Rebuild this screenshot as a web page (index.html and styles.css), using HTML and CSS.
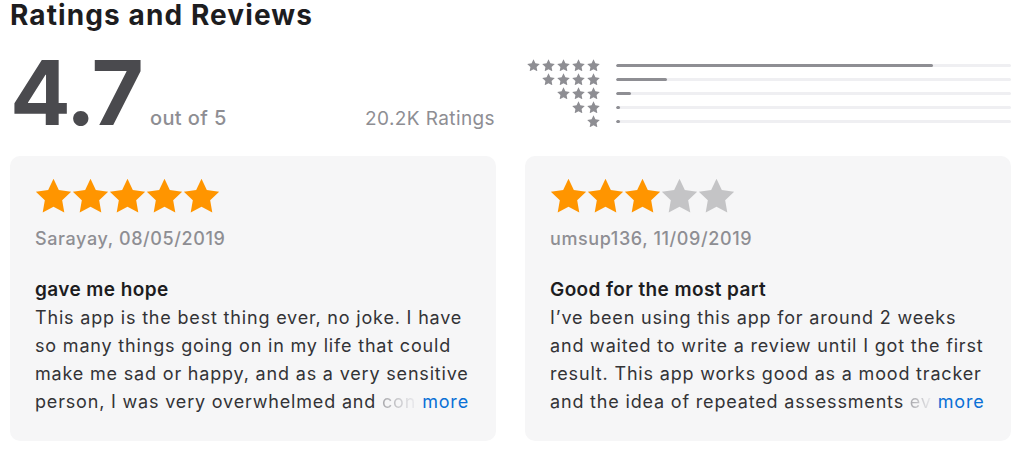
FILE: index.html
```html
<!DOCTYPE html>
<html>
<head>
<meta charset="utf-8">
<link rel="stylesheet" href="styles.css">
</head>
<body>
<svg width="0" height="0" class="defs">
  <defs>
    <symbol id="star" viewBox="0 0 24 23">
      <path d="M12 0.5l3.5 7.4 8.1 1.1-5.9 5.7 1.4 8L12 18.9l-7.1 3.8 1.4-8L0.4 9l8.1-1.1z"/>
    </symbol>
  </defs>
</svg>
<section class="ratings">
  <h1 class="title">Ratings and Reviews</h1>
  <div class="summary">
    <div class="score">
      <span class="big">4.7</span>
      <span class="outof">out of 5</span>
      <span class="count">20.2K Ratings</span>
    </div>
    <div class="hist">
      <div class="row">
        <div class="mini"><svg><use href="#star"/></svg><svg><use href="#star"/></svg><svg><use href="#star"/></svg><svg><use href="#star"/></svg><svg><use href="#star"/></svg></div>
        <div class="track"><div class="fill" style="width:80.2%"></div></div>
      </div>
      <div class="row">
        <div class="mini"><svg><use href="#star"/></svg><svg><use href="#star"/></svg><svg><use href="#star"/></svg><svg><use href="#star"/></svg></div>
        <div class="track"><div class="fill" style="width:12.8%"></div></div>
      </div>
      <div class="row">
        <div class="mini"><svg><use href="#star"/></svg><svg><use href="#star"/></svg><svg><use href="#star"/></svg></div>
        <div class="track"><div class="fill" style="width:3.9%"></div></div>
      </div>
      <div class="row">
        <div class="mini"><svg><use href="#star"/></svg><svg><use href="#star"/></svg></div>
        <div class="track"><div class="fill" style="width:1%"></div></div>
      </div>
      <div class="row">
        <div class="mini"><svg><use href="#star"/></svg></div>
        <div class="track"><div class="fill" style="width:1%"></div></div>
      </div>
    </div>
  </div>
  <div class="cards">
    <article class="card">
      <div class="stars">
        <svg class="on"><use href="#star"/></svg><svg class="on"><use href="#star"/></svg><svg class="on"><use href="#star"/></svg><svg class="on"><use href="#star"/></svg><svg class="on"><use href="#star"/></svg>
      </div>
      <div class="author">Sarayay, 08/05/2019</div>
      <h2 class="rtitle">gave me hope</h2>
      <p class="body">This app is the best thing ever, no joke. I have<br>so many things going on in my life that could<br>make me sad or happy, and as a very sensitive<br>person, I was very overwhelmed and <span class="fade">con</span><span class="more">more</span></p>
    </article>
    <article class="card">
      <div class="stars">
        <svg class="on"><use href="#star"/></svg><svg class="on"><use href="#star"/></svg><svg class="on"><use href="#star"/></svg><svg class="off"><use href="#star"/></svg><svg class="off"><use href="#star"/></svg>
      </div>
      <div class="author">umsup136, 11/09/2019</div>
      <h2 class="rtitle">Good for the most part</h2>
      <p class="body">I’ve been using this app for around 2 weeks<br>and waited to write a review until I got the first<br>result. This app works good as a mood tracker<br>and the idea of repeated assessments <span class="fade">ev</span><span class="more">more</span></p>
    </article>
  </div>
</section>
</body>
</html>
```
FILE: styles.css
```css
* { box-sizing: border-box; }
html, body { margin: 0; padding: 0; background: #fff; }
body {
  font-family: Inter, "Noto Sans", "Liberation Sans", sans-serif;
  color: #1d1d1f;
}
.defs { position: absolute; }
.ratings { padding: 0 11px 0 10px; }
.title {
  margin: 0;
  font-size: 28px;
  line-height: 30px;
  font-weight: 700;
  letter-spacing: 1.1px;
  color: #1d1d1f;
}
.summary {
  display: flex;
  align-items: flex-start;
  height: 126px;
}
.score {
  width: 485px;
  display: flex;
  align-items: baseline;
  padding-top: 15px;
}
.big {
  font-size: 90px;
  font-weight: 700;
  letter-spacing: -2px;
  line-height: 96px;
  color: #4a4a4e;
}
.outof {
  font-size: 20px;
  font-weight: 500;
  letter-spacing: 0.4px;
  color: #8e8e93;
  margin-left: 8px;
}
.count {
  margin-left: auto;
  font-size: 19px;
  letter-spacing: 0.4px;
  color: #8e8e93;
}
.hist {
  flex: 1;
  margin-left: 30px;
  padding-top: 28px;
  display: flex;
  flex-direction: column;
}
.row {
  display: flex;
  align-items: center;
  height: 14px;
}
.mini {
  width: 75px;
  display: flex;
  justify-content: flex-end;
  gap: 2px;
}
.mini svg { width: 13px; height: 12.5px; fill: #8e8e93; }
.track {
  flex: 1;
  margin-left: 16px;
  height: 3px;
  background: #efeff2;
  border-radius: 2px;
  overflow: hidden;
}
.fill { height: 100%; background: #8e8e93; border-radius: 2px; min-width: 4px; }
.cards {
  display: flex;
  gap: 29px;
}
.card {
  flex: 1;
  height: 285px;
  background: #f6f6f7;
  border-radius: 10px;
  padding: 20px 20px 0 25px;
}
.stars { display: flex; height: 38px; align-items: center; }
.stars svg { width: 37px; height: 35px; }
.stars .on { fill: #ff9500; }
.stars .off { fill: #c4c4c6; }
.author {
  margin-top: 13px;
  font-size: 18px;
  font-weight: 500;
  letter-spacing: 0.6px;
  color: #8e8e93;
  line-height: 24px;
}
.rtitle {
  margin: 26px 0 0;
  font-size: 19px;
  font-weight: 600;
  letter-spacing: 0.4px;
  line-height: 26px;
  color: #1d1d1f;
}
.body {
  margin: 1px 0 0;
  font-size: 18px;
  letter-spacing: 0.82px;
  line-height: 28px;
  color: #333336;
  white-space: nowrap;
}
.fade {
  background: linear-gradient(90deg, #a9a9ad, #ececef);
  -webkit-background-clip: text;
  background-clip: text;
  color: transparent;
}
.more { color: #0a70d6; margin-left: 6px; }
```
